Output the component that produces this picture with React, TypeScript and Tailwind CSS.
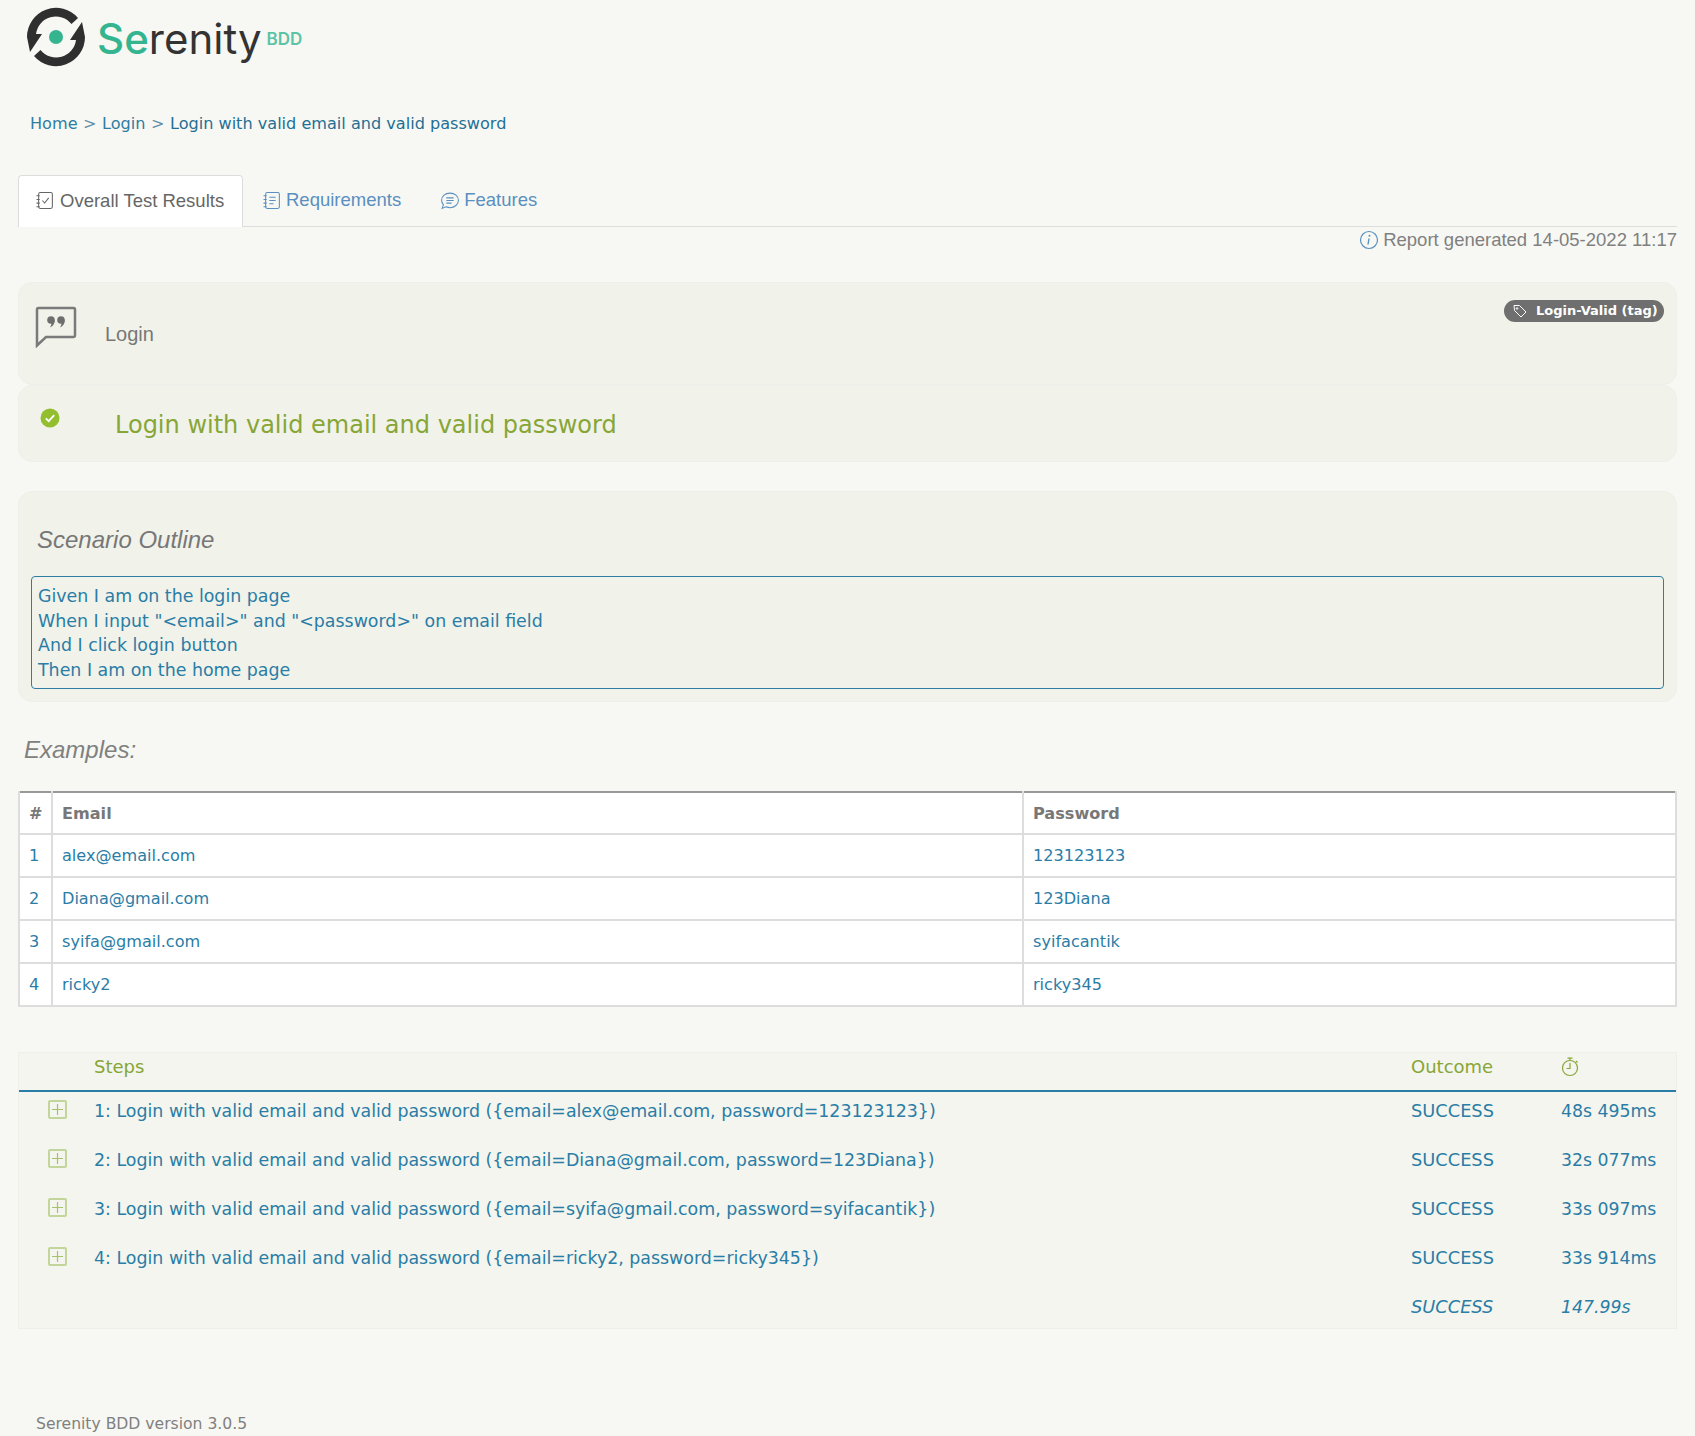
const dejavu = "font-['DejaVu_Sans',sans-serif]"

const examples = [
  ['1', 'alex@email.com', '123123123'],
  ['2', 'Diana@gmail.com', '123Diana'],
  ['3', 'syifa@gmail.com', 'syifacantik'],
  ['4', 'ricky2', 'ricky345'],
]

const steps = [
  ['1: Login with valid email and valid password ({email=alex@email.com, password=123123123})', '48s 495ms'],
  ['2: Login with valid email and valid password ({email=Diana@gmail.com, password=123Diana})', '32s 077ms'],
  ['3: Login with valid email and valid password ({email=syifa@gmail.com, password=syifacantik})', '33s 097ms'],
  ['4: Login with valid email and valid password ({email=ricky2, password=ricky345})', '33s 914ms'],
]

function Logo() {
  return (
    <svg width="62" height="62" viewBox="0 0 62 62" className="shrink-0">
      <path d="M53 12A29 29 0 0 0 2 31L5 46L17 28L11 28A20 20 0 0 1 46.500 18Z" fill="#2f2f2f" />
      <path d="M9 50A29 29 0 0 0 60 31L57 16L45 34L51 34A20 20 0 0 1 15.500 44Z" fill="#2f2f2f" />
      <circle cx="31" cy="31" r="7" fill="#35b58f" />
    </svg>
  )
}

function NoteIcon({ color, check }: { color: string; check?: boolean }) {
  return (
    <svg width="19" height="19" viewBox="0 0 18 18" fill="none" stroke={color} strokeWidth="1" className="shrink-0">
      <rect x="2.500" y="1.500" width="13" height="15" rx="1.500" />
      <path d="M0.500 4.500h3M0.500 8h3M0.500 11.500h3M0.500 15h3" />
      {check ? <path d="M6 9l2.200 2.400L12 6.500" /> : <path d="M6 6h6M6 9h6M6 12h4" />}
    </svg>
  )
}

export default function App() {
  return (
    <div className="h-[1436px] overflow-hidden bg-[#f7f8f3] font-['Liberation_Sans',sans-serif]">
      <header className="flex h-[72px] items-start pl-[25px] pt-[6px]">
        <Logo />
        <div className="ml-[10px] mt-[8px] flex items-start font-['Inter',sans-serif] text-[42px] leading-[50px]">
          <span className="font-medium text-[#35b58f]">Se</span>
          <span className="font-normal text-[#333333]">renity</span>
          <span className="ml-[5px] mt-[15px] text-[17px] leading-[20px] font-semibold text-[#5cc4a5]">BDD</span>
        </div>
      </header>

      <nav className={`ml-[30px] mt-[41px] flex h-[22px] items-center text-[16.100px] leading-[22px] text-[#2f7da3] ${dejavu}`}>
        Home<span className="mx-[5.500px] text-[#5f8ea8]">&gt;</span>Login<span className="mx-[5.500px] text-[#5f8ea8]">&gt;</span>
        <span className="text-[#1f6f96]">Login with valid email and valid password</span>
      </nav>

      <main className="mx-[18px] mt-[40px]">
        <div className="flex h-[52px] items-end border-b border-[#dddddd]">
          <div className="-mb-px flex h-[52px] w-[225px] items-center gap-[5px] rounded-t border border-b-0 border-[#dddddd] bg-white pb-[2px] pl-[17px] text-[18.500px] text-[#666666]">
            <NoteIcon color="#666666" check />
            Overall Test Results
          </div>
          <div className="ml-[20px] flex h-[52px] items-center gap-[4px] text-[18.500px] text-[#5a8fc0]">
            <NoteIcon color="#5a8fc0" />
            Requirements
          </div>
          <div className="ml-[39px] flex h-[52px] items-center gap-[4px] text-[18.500px] text-[#5a8fc0]">
            <svg width="20" height="19" viewBox="0 0 19 18" fill="none" stroke="#5a8fc0" strokeWidth="1" className="shrink-0">
              <path d="M9.500 2C5 2 1.500 4.900 1.500 8.800c0 1.700.7 3.200 1.800 4.400L2 16.500l3.800-1.500c1.100.5 2.400.8 3.700.8 4.500 0 8-3.100 8-7S14 2 9.500 2z" />
              <path d="M6 6.500h7M6 9h7M6 11.500h5" />
            </svg>
            Features
          </div>
        </div>

        <div className="flex h-[26px] items-center justify-end gap-[4px] text-[18.500px] text-[#808080]">
          <svg width="20" height="20" viewBox="0 0 20 20" className="shrink-0">
            <circle cx="10" cy="10" r="8.500" fill="none" stroke="#5a8fc0" strokeWidth="1.200" />
            <circle cx="10.500" cy="5.800" r="1" fill="#5a8fc0" />
            <path d="M10 8.500L9 14.500" stroke="#5a8fc0" strokeWidth="1.400" />
          </svg>
          Report generated 14-05-2022 11:17
        </div>

        <section className="relative mt-[29px] flex h-[103px] rounded-[14px] border border-[#eeefe8] bg-[#f1f2ea]">
          <svg width="42" height="42" viewBox="0 0 42 42" className="ml-[16px] mt-[23px] shrink-0">
            <path d="M3.500 2h35a1.500 1.500 0 0 1 1.500 1.500v26a1.500 1.500 0 0 1-1.500 1.500H11L2 39.500V3.500A1.500 1.500 0 0 1 3.500 2z" fill="none" stroke="#7a7a7a" strokeWidth="2.500" />
            <circle cx="16" cy="14" r="3.800" fill="#6f6f6f" />
            <circle cx="26" cy="14" r="3.800" fill="#6f6f6f" />
            <path d="M19.800 14c0 4-2.200 6.500-5 7.500 1.200-1.500 1.800-3 1.500-4.500zM29.800 14c0 4-2.200 6.500-5 7.500 1.200-1.500 1.800-3 1.500-4.500z" fill="#6f6f6f" />
          </svg>
          <span className="ml-[28px] mt-[39px] text-[20px] leading-[24px] text-[#777777]">Login</span>
          <span className={`absolute right-[12px] top-[17px] flex h-[22px] w-[160px] items-center rounded-full bg-[#6f6f6f] pl-[9px] text-[13px] font-bold text-white ${dejavu}`}>
            <svg width="14" height="14" viewBox="0 0 14 14" fill="none" stroke="#ffffff" strokeWidth="1" className="mr-[9px] shrink-0">
              <path d="M1 1.500h5.500l6.500 6.500-5 5-6.500-6.500z" />
              <circle cx="4" cy="4.500" r="0.800" />
            </svg>
            Login-Valid (tag)
          </span>
        </section>

        <section className="flex h-[77px] rounded-[14px] border border-[#eeefe8] bg-[#f1f2ea]">
          <svg width="20" height="20" viewBox="0 0 20 20" className="ml-[21px] mt-[22px] shrink-0">
            <circle cx="10" cy="10" r="9.500" fill="#93bf2f" />
            <path d="M5.800 10.300l2.900 2.900 5.500-6" fill="none" stroke="#ffffff" strokeWidth="1.800" />
          </svg>
          <h1 className={`ml-[55px] mt-[21px] text-[24px] leading-[36px] font-normal text-[#87a636] ${dejavu}`}>
            Login with valid email and valid password
          </h1>
        </section>

        <section className="mt-[29px] h-[211px] rounded-[14px] border border-[#eeefe8] bg-[#f1f2ea] px-[12px]">
          <h2 className="ml-[6px] mt-[33px] text-[24px] leading-[30px] italic text-[#777777]">Scenario Outline</h2>
          <div className={`mt-[21px] h-[113px] rounded border border-[#2f7da3] pb-[5px] pl-[6px] pt-[7px] text-[17.400px] leading-[24.500px] text-[#2a7da6] ${dejavu}`}>
            <div>Given I am on the login page</div>
            <div>When I input "&lt;email&gt;" and "&lt;password&gt;" on email field</div>
            <div>And I click login button</div>
            <div>Then I am on the home page</div>
          </div>
        </section>

        <h2 className="ml-[6px] mt-[33px] text-[24px] leading-[30px] italic text-[#808080]">Examples:</h2>

        <table className={`mt-[26px] w-full table-fixed border-collapse border-t-2 border-t-[#999999] bg-white text-[16.100px] text-[#2a7da6] ${dejavu}`}>
          <colgroup>
            <col className="w-[33px]" />
            <col className="w-[971px]" />
            <col />
          </colgroup>
          <thead>
            <tr className="h-[42px] text-left font-bold text-[#777777]">
              <th className="border-x-2 border-[#dddddd] pl-[9px] pt-[2px]">#</th>
              <th className="border-x-2 border-[#dddddd] pl-[9px] pt-[2px]">Email</th>
              <th className="border-x-2 border-[#dddddd] pl-[9px] pt-[2px]">Password</th>
            </tr>
          </thead>
          <tbody>
            {examples.map(row => (
              <tr key={row[0]} className="h-[43px]">
                <td className="border-2 border-[#dddddd] pl-[9px] pt-[2px]">{row[0]}</td>
                <td className="border-2 border-[#dddddd] pl-[9px] pt-[2px]">{row[1]}</td>
                <td className="border-2 border-[#dddddd] pl-[9px] pt-[2px]">{row[2]}</td>
              </tr>
            ))}
          </tbody>
        </table>

        <section className={`mt-[45px] h-[277px] border border-[#eeefe8] bg-[#f4f5ee] text-[17.300px] text-[#2a7da6] ${dejavu}`}>
          <div className="flex h-[39px] items-start border-b-2 border-[#2a7da6] pt-[1px] text-[18px] leading-[26px] text-[#87a636]">
            <span className="ml-[75px] flex-1">Steps</span>
            <span className="w-[150px]">Outcome</span>
            <span className="w-[115px] pt-[3px]">
              <svg width="18" height="20" viewBox="0 0 18 20" fill="none" stroke="#87a636" strokeWidth="1.200">
                <circle cx="9" cy="11" r="7.500" />
                <path d="M9 6v5.500H5.500M6.500 1.200h5M9 1.200v2M15 4l1.500 1.500" />
              </svg>
            </span>
          </div>
          {steps.map(step => (
            <div key={step[0]} className="flex h-[49.100px] items-start pt-[6px] leading-[26px]">
              <span className="ml-[29px] mr-[27px] mt-[2px] flex h-[19px] w-[19px] shrink-0 items-center justify-center rounded-[2px] border-2 border-[#c2d69b]">
                <svg width="11" height="11" viewBox="0 0 11 11" stroke="#a6c26a" strokeWidth="1.200">
                  <path d="M5.500 0v11M0 5.500h11" />
                </svg>
              </span>
              <span className="flex-1 text-[17.400px]">{step[0]}</span>
              <span className="w-[150px] text-[17.800px]">SUCCESS</span>
              <span className="w-[115px]">{step[1]}</span>
            </div>
          ))}
          <div className="flex h-[40px] items-start pt-[6px] leading-[26px] italic">
            <span className="flex-1" />
            <span className="w-[150px] text-[17.800px]">SUCCESS</span>
            <span className="w-[115px]">147.99s</span>
          </div>
        </section>

        <footer className={`ml-[18px] mt-[84px] text-[15.600px] leading-[22px] text-[#808080] ${dejavu}`}>Serenity BDD version 3.0.5</footer>
      </main>
    </div>
  )
}
